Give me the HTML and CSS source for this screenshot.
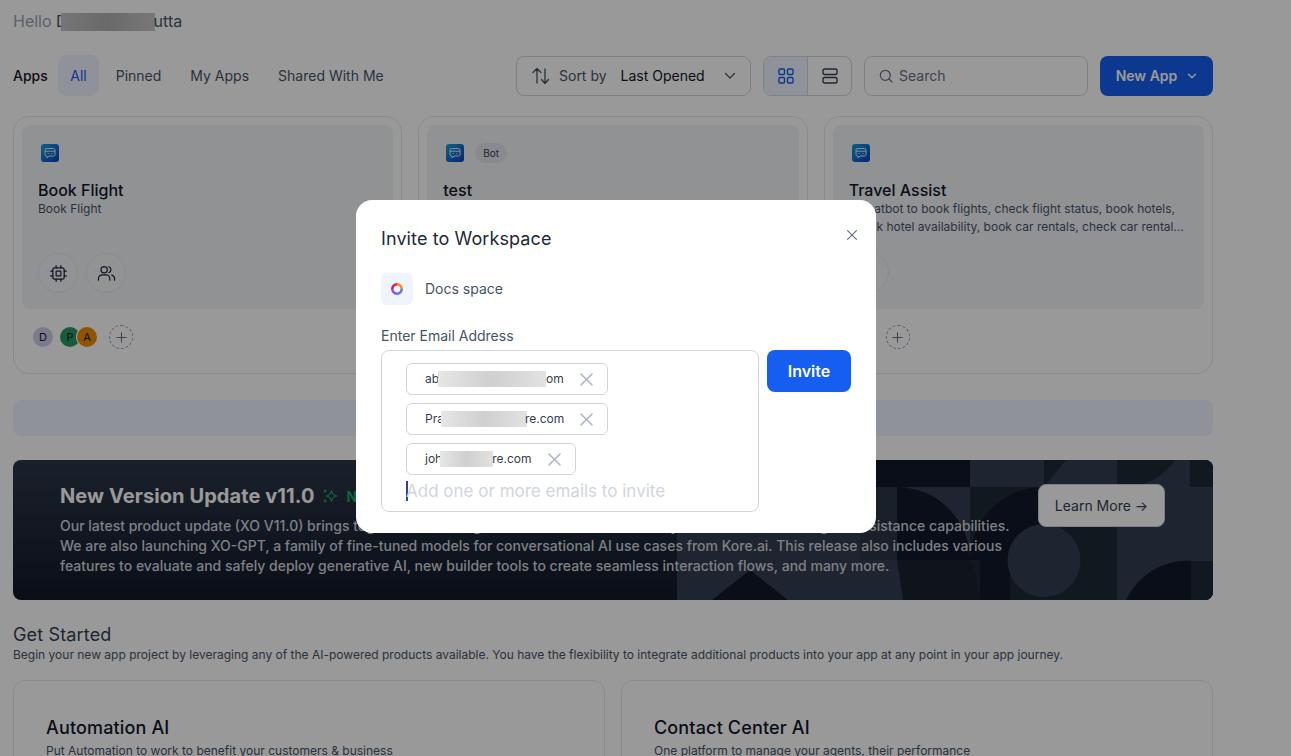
FILE: index.html

```html
<!DOCTYPE html>
<html lang="en">
<head>
<meta charset="utf-8"/>
<meta content="width=device-width, initial-scale=1.0" name="viewport"/>
<title>Apps</title>
<link rel="stylesheet" href="styles.css">
</head>
<body>
<svg class="sprite" width="0" height="0">
  <defs>
    <linearGradient id="botGrad" x1="0" y1="0" x2="1" y2="1">
      <stop offset="0" stop-color="#16a3d8"/>
      <stop offset="1" stop-color="#0b3fc0"/>
    </linearGradient>
    <symbol id="bot" viewBox="0 0 18 18">
      <rect width="18" height="18" rx="3" fill="url(#botGrad)"/>
      <path d="M5.500 4.500h7a1.500 1.500 0 0 1 1.500 1.500v4.500a1.500 1.500 0 0 1-1.500 1.500H8l-2 2v-2h-.5A1.500 1.500 0 0 1 4 10.500V6a1.500 1.500 0 0 1 1.500-1.500zM4 7.200h10" fill="none" stroke="#dcecff" stroke-width="1"/>
      <path d="M7.200 9.100v.8M10.800 9.100v.8" stroke="#dcecff" stroke-width="1.100"/>
    </symbol>
    <symbol id="chip" viewBox="0 0 20 20">
      <g fill="none" stroke="#1d2939" stroke-width="1.300" stroke-linecap="round">
        <rect x="4" y="4" width="12" height="12" rx="2"/>
        <rect x="7.500" y="7.500" width="5" height="5" rx=".6"/>
        <path d="M7.500 1.800V4M12.500 1.800V4M7.500 16v2.200M12.500 16v2.200M1.800 7.500H4M1.800 12.500H4M16 7.500h2.200M16 12.500h2.200"/>
      </g>
    </symbol>
    <symbol id="users" viewBox="0 0 20 20">
      <g fill="none" stroke="#1d2939" stroke-width="1.300" stroke-linecap="round">
        <circle cx="7.500" cy="6" r="3.300"/>
        <path d="M1.500 17v-1.500a4 4 0 0 1 4-4h4a4 4 0 0 1 4 4V17M12.500 2.900a3.300 3.300 0 0 1 0 6.200M15.500 11.700a4 4 0 0 1 3 3.800V17"/>
      </g>
    </symbol>
    <symbol id="plus" viewBox="0 0 12 12">
      <path d="M6 1v10M1 6h10" fill="none" stroke="#667085" stroke-width="1.200" stroke-linecap="round"/>
    </symbol>
    <symbol id="cross" viewBox="0 0 14 14">
      <path d="M1 1l12 12M13 1L1 13" fill="none" stroke="#a9b1be" stroke-width="1.500" stroke-linecap="round"/>
    </symbol>
  </defs>
</svg>

<div class="page">
  <div class="hello">Hello <span class="hello-name">D<span class="blur blur-dark"></span>utta</span></div>

  <div class="toolbar">
    <span class="apps-label">Apps</span>
    <a class="tab tab-active">All</a>
    <a class="tab">Pinned</a>
    <a class="tab">My Apps</a>
    <a class="tab">Shared With Me</a>
    <div class="sort">
      <svg width="20" height="20" viewBox="0 0 20 20" fill="none" stroke="#475467" stroke-width="1.300" stroke-linecap="round" stroke-linejoin="round"><path d="M6 17V2.500M2 6.500l4-4 4 4M14 3v14.500M10.500 13.500l3.500 4 3.500-4"/></svg>
      <span class="sort-by">Sort by</span>
      <span class="sort-value">Last Opened</span>
      <svg class="sort-caret" width="12" height="12" viewBox="0 0 12 12" fill="none" stroke="#475467" stroke-width="1.200" stroke-linecap="round" stroke-linejoin="round"><path d="M1.500 3.500L6 8l4.500-4.500"/></svg>
    </div>
    <div class="view-toggle">
      <span class="view-btn view-btn-active">
        <svg width="16" height="16" viewBox="0 0 16 16" fill="none" stroke="#155eef" stroke-width="1.400"><rect x="1" y="1" width="5.500" height="5.500" rx="1"/><rect x="9.500" y="1" width="5.500" height="5.500" rx="1"/><rect x="1" y="9.500" width="5.500" height="5.500" rx="1"/><rect x="9.500" y="9.500" width="5.500" height="5.500" rx="1"/></svg>
      </span>
      <span class="view-btn">
        <svg width="16" height="16" viewBox="0 0 16 16" fill="none" stroke="#344054" stroke-width="1.400"><rect x="1" y="1" width="14" height="5.500" rx="1.500"/><rect x="1" y="9.500" width="14" height="5.500" rx="1.500"/></svg>
      </span>
    </div>
    <div class="search">
      <svg width="14" height="14" viewBox="0 0 14 14" fill="none" stroke="#667085" stroke-width="1.200" stroke-linecap="round"><circle cx="6.300" cy="6.300" r="5"/><path d="M10 10l3 3"/></svg>
      <span>Search</span>
    </div>
    <button class="new-app">New App
      <svg width="10" height="10" viewBox="0 0 10 10" fill="none" stroke="#fff" stroke-width="1.500" stroke-linecap="round" stroke-linejoin="round"><path d="M1.500 3.300L5 6.800l3.500-3.500"/></svg>
    </button>
  </div>

  <div class="app-grid">
    <div class="app-card">
      <div class="app-inner">
        <div class="app-tags"><svg class="bot-icon"><use href="#bot"/></svg></div>
        <div class="app-title">Book Flight</div>
        <div class="app-desc">Book Flight</div>
        <div class="app-actions">
          <span class="round-btn"><svg width="19" height="19"><use href="#chip"/></svg></span>
          <span class="round-btn"><svg width="19" height="19"><use href="#users"/></svg></span>
        </div>
      </div>
      <div class="app-people">
        <span class="avatar avatar-d">D</span>
        <span class="avatar avatar-p">P</span>
        <span class="avatar avatar-a">A</span>
        <span class="add-person"><svg width="11" height="11"><use href="#plus"/></svg></span>
      </div>
    </div>
    <div class="app-card">
      <div class="app-inner">
        <div class="app-tags"><svg class="bot-icon"><use href="#bot"/></svg><span class="tag">Bot</span></div>
        <div class="app-title">test</div>
        <div class="app-desc">test</div>
        <div class="app-actions">
          <span class="round-btn"><svg width="19" height="19"><use href="#chip"/></svg></span>
        </div>
      </div>
      <div class="app-people">
        <span class="avatar avatar-d"></span>
        <span class="add-person"><svg width="11" height="11"><use href="#plus"/></svg></span>
      </div>
    </div>
    <div class="app-card">
      <div class="app-inner">
        <div class="app-tags"><svg class="bot-icon"><use href="#bot"/></svg></div>
        <div class="app-title">Travel Assist</div>
        <div class="app-desc">A chatbot to book flights, check flight status, book hotels, check hotel availability, book car rentals, check car rental availability and more</div>
        <div class="app-actions">
          <span class="round-btn"></span>
        </div>
      </div>
      <div class="app-people">
        <span class="avatar avatar-d"></span>
        <span class="avatar avatar-p avatar-tight"></span>
        <span class="add-person"><svg width="11" height="11"><use href="#plus"/></svg></span>
      </div>
    </div>
  </div>

  <div class="strip"></div>

  <div class="banner">
    <svg class="banner-art" width="536" height="140" viewBox="677 460 536 140">
      <rect x="677" y="460" width="536" height="140" fill="#343e50"/>
      <rect x="677" y="460" width="220" height="27" fill="#1a2332"/>
      <rect x="824" y="460" width="146" height="27" fill="#111828"/>
      <rect x="860" y="487" width="37" height="73" fill="#2c3646"/>
      <path d="M897 487A73 73 0 0 1 970 560H897Z" fill="#111828"/>
      <rect x="970" y="487" width="147" height="113" fill="#1d2836"/>
      <path d="M970 560A74 73 0 0 1 1044 487V560Z" fill="#111828"/>
      <path d="M897 560H970Q978 580 980 600H903Q900 580 897 560Z" fill="#1a2230"/>
      <rect x="980" y="560" width="30" height="40" fill="#111828"/>
      <circle cx="1044" cy="560.500" r="36.500" fill="#343e50"/>
      <path d="M1044 487V460h22Z" fill="#1d2836"/>
      <path d="M1117 460h58A62 62 0 0 1 1117 487Z" fill="#1d2836"/>
      <rect x="1190" y="460" width="23" height="27" fill="#1d2836"/>
      <path d="M1126 600A67 67 0 0 1 1191 561V600Z" fill="#111828"/>
      <rect x="1191" y="561" width="22" height="39" fill="#1d2836"/>
      <path d="M712 600L750 570L788 600Z" fill="#111828"/>
    </svg>
    <div class="banner-text">
      <div class="banner-title">New Version Update v11.0
        <svg class="sparkle" width="16" height="16" viewBox="0 0 16 16" fill="none" stroke="#17b26a" stroke-width="1.100" stroke-linejoin="round"><path d="M9.500 2.500C10 6 11.500 7.500 15 8c-3.500.5-5 2-5.500 5.500C9 10 7.500 8.500 4 8c3.500-.5 5-2 5.500-5.500z"/><path d="M3 1.500v3M1.500 3h3M3 11.500v3M1.500 13h3"/></svg>
        <span class="banner-new">New</span>
      </div>
      <p class="banner-body">Our latest product update (XO V11.0) brings together all latest generative AI tools to elevate your automation and agent assistance capabilities.<br>We are also launching XO-GPT, a family of fine-tuned models for conversational AI use cases from Kore.ai. This release also includes various<br>features to evaluate and safely deploy generative AI, new builder tools to create seamless interaction flows, and many more.</p>
    </div>
    <button class="learn-more">Learn More →</button>
  </div>

  <h2 class="section-title">Get Started</h2>
  <p class="section-sub">Begin your new app project by leveraging any of the AI-powered products available. You have the flexibility to integrate additional products into your app at any point in your app journey.</p>

  <div class="product-grid">
    <div class="product-card">
      <div class="product-title">Automation AI</div>
      <div class="product-desc">Put Automation to work to benefit your customers &amp; business</div>
    </div>
    <div class="product-card">
      <div class="product-title">Contact Center AI</div>
      <div class="product-desc">One platform to manage your agents, their performance</div>
    </div>
  </div>
</div>

<div class="overlay"></div>

<div class="modal">
  <h3 class="modal-title">Invite to Workspace</h3>
  <svg class="modal-close" width="10" height="10" viewBox="0 0 10 10" fill="none" stroke="#667085" stroke-width="1.200" stroke-linecap="round"><path d="M.6.6l8.800 8.800M9.400.6L.6 9.400"/></svg>
  <div class="workspace">
    <span class="workspace-icon">
      <svg width="12" height="12" viewBox="0 0 12 12" fill="none" stroke-width="2.600">
        <path d="M6 1.300A4.700 4.700 0 0 1 10.700 6" stroke="#f79009"/>
        <path d="M10.700 6A4.700 4.700 0 0 1 6 10.700" stroke="#6172f3"/>
        <path d="M6 10.700A4.700 4.700 0 0 1 1.300 6" stroke="#7a5af8"/>
        <path d="M1.300 6A4.700 4.700 0 0 1 6 1.300" stroke="#e31b54"/>
      </svg>
    </span>
    <span class="workspace-name">Docs space</span>
  </div>
  <label class="email-label">Enter Email Address</label>
  <div class="invite-row">
    <div class="email-box">
      <div class="email-chip"><span class="chip-text">ab<span class="blur blur-a"></span>om</span><svg width="13" height="13"><use href="#cross"/></svg></div>
      <div class="email-chip"><span class="chip-text">Pra<span class="blur blur-b"></span>re.com</span><svg width="13" height="13"><use href="#cross"/></svg></div>
      <div class="email-chip"><span class="chip-text">joh<span class="blur blur-c"></span>re.com</span><svg width="13" height="13"><use href="#cross"/></svg></div>
      <div class="email-input">Add one or more emails to invite</div>
    </div>
    <button class="invite-btn">Invite</button>
  </div>
</div>
</body>
</html>
```

FILE: styles.css

```css
* {
  box-sizing: border-box;
}
html, body {
  height: 756px;
  overflow: hidden;
}
body {
  margin: 0;
  background: #fff;
  font-family: Inter, "Liberation Sans", sans-serif;
  color: #344054;
}
button {
  font-family: inherit;
}
.sprite {
  position: absolute;
}
.page {
  width: 1213px;
  padding-left: 13px;
}
.hello {
  padding-top: 12px;
  height: 55px;
  font-size: 16px;
  line-height: 18px;
  color: #98a2b3;
}
.hello-name {
  color: #475467;
}
.blur {
  display: inline-block;
  vertical-align: middle;
  height: 16px;
  background: linear-gradient(90deg, #e6e6e6, #cfcfcf 50%, #e2e2e2);
}
.blur-dark {
  width: 94px;
  height: 18px;
  margin: -2px -1px 0 -7px;
  background: linear-gradient(90deg, #c4c4c4, #b0b0b0 50%, #c8c8c8);
}
.blur-a { width: 108px; margin-left: -1px; }
.blur-b { width: 86px; margin: 0 -2px 0 -3px; }
.blur-c { width: 53px; margin: 0 -1px 0 -2px; }

.toolbar {
  display: flex;
  align-items: center;
  height: 41px;
  font-size: 14px;
}
.apps-label {
  font-weight: 500;
  color: #101828;
  margin-right: 10px;
}
.tab {
  padding: 0 14.500px;
  height: 41px;
  line-height: 41px;
  color: #475467;
  border-radius: 8px;
}
.tab-active {
  background: #eff4ff;
  color: #155eef;
  padding: 0 12.500px;
  margin-right: 2px;
}
.sort {
  display: flex;
  align-items: center;
  width: 235px;
  height: 40px;
  margin-left: auto;
  padding: 0 14px;
  border: 1px solid #d0d5dd;
  border-radius: 8px;
}
.sort-by {
  margin-left: 8px;
  color: #475467;
}
.sort-value {
  margin-left: 14px;
  color: #101828;
}
.sort-caret {
  margin-left: auto;
}
.view-toggle {
  display: flex;
  width: 89px;
  height: 40px;
  margin-left: 12px;
  border: 1px solid #d0d5dd;
  border-radius: 8px;
  overflow: hidden;
}
.view-btn {
  flex: 1;
  display: flex;
  align-items: center;
  justify-content: center;
}
.view-btn-active {
  background: #eff4ff;
  border-right: 1px solid #d0d5dd;
}
.search {
  display: flex;
  align-items: center;
  gap: 6px;
  width: 224px;
  height: 40px;
  margin-left: 12px;
  padding: 0 14px;
  border: 1px solid #d0d5dd;
  border-radius: 8px;
  color: #667085;
}
.new-app {
  display: flex;
  align-items: center;
  justify-content: center;
  gap: 10px;
  width: 113px;
  height: 40px;
  margin-left: 12px;
  border: 0;
  border-radius: 8px;
  background: #155eef;
  color: #fff;
  font-size: 14px;
  font-weight: 600;
}

.app-grid {
  display: grid;
  grid-template-columns: repeat(3, 1fr);
  gap: 16px;
  margin-top: 20px;
}
.app-card {
  height: 258px;
  padding: 8px;
  border: 1px solid #e4e7ec;
  border-radius: 16px;
}
.app-inner {
  display: flex;
  flex-direction: column;
  height: 184px;
  padding: 18px 16px 16px;
  border-radius: 8px;
  background: #f2f4f7;
}
.app-tags {
  display: flex;
  align-items: center;
  gap: 11px;
  height: 20px;
  padding-left: 3px;
}
.bot-icon {
  width: 18px;
  height: 18px;
}
.tag {
  padding: 0 8px;
  height: 20px;
  line-height: 20px;
  border-radius: 10px;
  background: #e4e7ec;
  font-size: 10px;
  color: #344054;
}
.app-title {
  margin-top: 17px;
  font-size: 16px;
  line-height: 20px;
  font-weight: 500;
  color: #101828;
}
.app-desc {
  font-size: 12px;
  line-height: 18px;
  color: #475467;
  display: -webkit-box;
  -webkit-line-clamp: 2;
  -webkit-box-orient: vertical;
  overflow: hidden;
}
.app-actions {
  display: flex;
  gap: 8px;
  margin-top: auto;
}
.round-btn {
  display: flex;
  align-items: center;
  justify-content: center;
  width: 40px;
  height: 40px;
  border: 1px solid #e4e7ec;
  border-radius: 50%;
  background: #f4f5f7;
}
.app-people {
  display: flex;
  align-items: center;
  height: 24px;
  margin: 16px 0 0 11px;
}
.avatar {
  display: flex;
  align-items: center;
  justify-content: center;
  width: 20px;
  height: 20px;
  border-radius: 50%;
  font-size: 11px;
  color: #101828;
}
.avatar-d {
  background: #cfcde8;
}
.avatar-p {
  margin-left: 7px;
  background: #279a62;
}
.avatar-a {
  position: relative;
  margin-left: -3px;
  background: #f08c00;
  box-shadow: 0 0 0 1px #fff;
}
.avatar-tight {
  margin-left: -10px;
}
.add-person {
  display: flex;
  align-items: center;
  justify-content: center;
  width: 24px;
  height: 24px;
  margin-left: 12px;
  border: 1px dashed #98a2b3;
  border-radius: 50%;
}

.strip {
  height: 36px;
  margin-top: 26px;
  border-radius: 8px;
  background: #eff4ff;
}
.banner {
  position: relative;
  display: flex;
  height: 140px;
  margin-top: 24px;
  border-radius: 8px;
  overflow: hidden;
  background: linear-gradient(180deg, #2d3748, #101828);
}
.banner-art {
  position: absolute;
  right: 0;
  top: 0;
}
.banner-text {
  position: relative;
  padding: 23px 0 0 47px;
}
.banner-title {
  display: flex;
  align-items: center;
  height: 26px;
  font-size: 20px;
  font-weight: 700;
  letter-spacing: 0.08px;
  color: #fff;
}
.sparkle {
  margin-left: 8px;
}
.banner-new {
  margin-left: 8px;
  font-size: 14px;
  font-weight: 600;
  color: #17b26a;
}
.banner-body {
  margin: 7px 0 0;
  font-size: 14px;
  line-height: 20px;
  font-weight: 500;
  white-space: nowrap;
  color: #d0d5dd;
}
.learn-more {
  position: absolute;
  left: 1025px;
  top: 24px;
  width: 127px;
  height: 43px;
  border: 1px solid #d0d5dd;
  border-radius: 8px;
  background: #fff;
  color: #344054;
  font-size: 14px;
}

.section-title {
  margin: 24px 0 0;
  font-size: 18px;
  line-height: 22px;
  font-weight: 400;
  letter-spacing: 0.15px;
  color: #344054;
}
.section-sub {
  margin: 0;
  font-size: 12px;
  line-height: 18px;
  color: #475467;
}
.product-grid {
  display: grid;
  grid-template-columns: 1fr 1fr;
  gap: 16px;
  margin-top: 16px;
}
.product-card {
  height: 200px;
  padding: 35px 32px;
  border: 1px solid #e4e7ec;
  border-radius: 12px;
}
.product-title {
  font-size: 18px;
  line-height: 24px;
  font-weight: 500;
  letter-spacing: 0.15px;
  color: #101828;
}
.product-desc {
  margin-top: 2px;
  font-size: 12px;
  line-height: 18px;
  color: #475467;
}

.overlay {
  position: fixed;
  inset: 0;
  background: rgba(0, 0, 0, 0.4);
}
.modal {
  position: fixed;
  left: 356px;
  top: 200px;
  width: 520px;
  height: 333px;
  padding: 25px;
  border-radius: 16px;
  background: #fff;
}
.modal-title {
  margin: 0;
  font-size: 18px;
  line-height: 28px;
  font-weight: 400;
  letter-spacing: 0.1px;
  color: #1d2939;
}
.modal-close {
  position: absolute;
  right: 19px;
  top: 30px;
}
.workspace {
  display: flex;
  align-items: center;
  gap: 12px;
  margin-top: 20px;
  font-size: 14px;
  color: #475467;
}
.workspace-name {
  padding-bottom: 2px;
}
.workspace-icon {
  display: flex;
  align-items: center;
  justify-content: center;
  width: 32px;
  height: 32px;
  border-radius: 6px;
  background: #eff4ff;
}
.email-label {
  display: block;
  margin-top: 21px;
  font-size: 14px;
  line-height: 20px;
  color: #475467;
}
.invite-row {
  display: flex;
  align-items: flex-start;
  gap: 8px;
  margin-top: 4px;
}
.email-box {
  display: flex;
  flex-direction: column;
  align-items: flex-start;
  gap: 8px;
  width: 378px;
  height: 162px;
  padding: 12px 24px;
  border: 1px solid #d0d5dd;
  border-radius: 8px;
}
.email-chip {
  display: flex;
  flex-shrink: 0;
  align-items: center;
  gap: 16px;
  height: 32px;
  padding: 0 14px 0 18px;
  border: 1px solid #d0d5dd;
  border-radius: 6px;
}
.chip-text {
  font-size: 12px;
  color: #344054;
  white-space: nowrap;
}
.email-input {
  flex-shrink: 0;
  height: 20px;
  margin-top: -2px;
  font-size: 17px;
  line-height: 20px;
  color: #d0d5dd;
  box-shadow: inset 2px 0 0 #2e3fa8;
}
.invite-btn {
  width: 84px;
  height: 42px;
  border: 0;
  border-radius: 8px;
  background: #155eef;
  color: #fff;
  font-size: 16px;
  font-weight: 600;
}
```
